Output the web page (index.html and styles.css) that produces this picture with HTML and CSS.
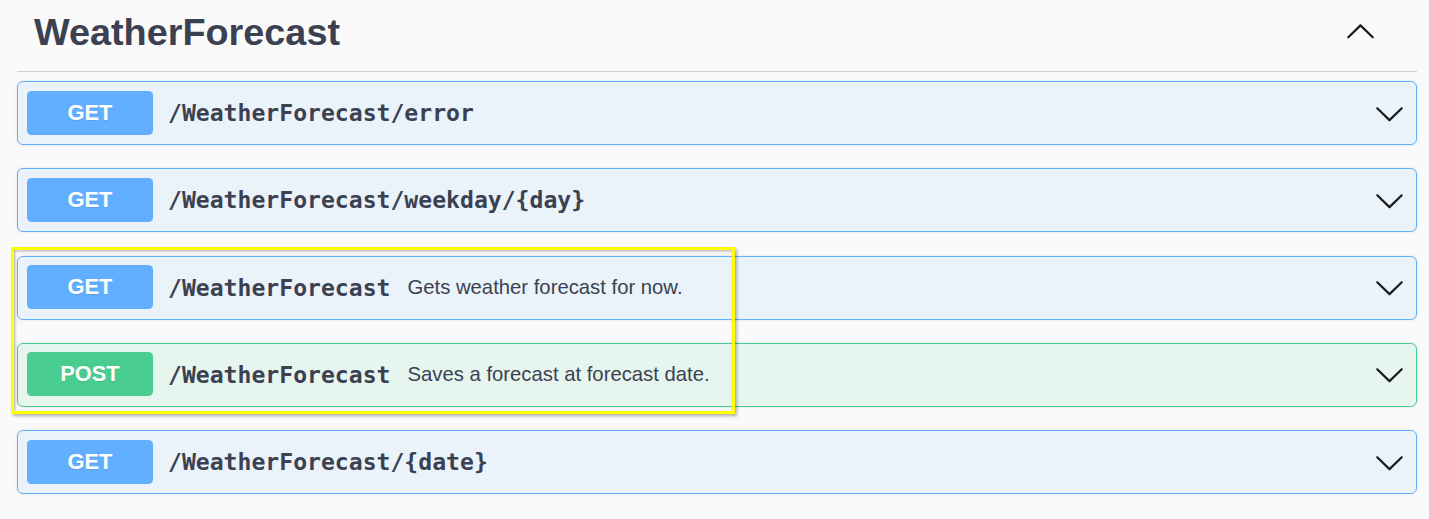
FILE: index.html
```html
<!DOCTYPE html>
<html lang="en">
<head>
<meta charset="utf-8">
<title>WeatherForecast</title>
<link rel="stylesheet" href="styles.css">
</head>
<body>
<div class="tag-section">
  <h3 class="tag-header">
    <span class="tag-title">WeatherForecast</span>
    <button class="tag-toggle" aria-label="Collapse">
      <svg viewBox="0 0 20 20" width="31" height="31"><path d="M17.418 14.891c.272.268.709.268.979 0s.271-.701 0-.969l-7.908-7.830c-.27-.268-.707-.268-.979 0l-7.908 7.83c-.27.268-.27.701 0 .969.271.268.709.268.979 0L10 7.75l7.418 7.141z"/></svg>
    </button>
  </h3>
  <div class="ops">
    <div class="opblock get">
      <span class="method">GET</span>
      <span class="path">/WeatherForecast/error</span>
      <span class="desc"></span>
      <svg class="arrow" viewBox="0 0 20 20" width="31" height="31"><path d="M17.418 6.109c.272-.268.709-.268.979 0s.271.701 0 .969l-7.908 7.83c-.27.268-.707.268-.979 0l-7.908-7.83c-.27-.268-.27-.701 0-.969.271-.268.709-.268.979 0L10 13.25l7.418-7.141z"/></svg>
    </div>
    <div class="opblock get">
      <span class="method">GET</span>
      <span class="path">/WeatherForecast/weekday/{day}</span>
      <span class="desc"></span>
      <svg class="arrow" viewBox="0 0 20 20" width="31" height="31"><path d="M17.418 6.109c.272-.268.709-.268.979 0s.271.701 0 .969l-7.908 7.83c-.27.268-.707.268-.979 0l-7.908-7.83c-.27-.268-.27-.701 0-.969.271-.268.709-.268.979 0L10 13.25l7.418-7.141z"/></svg>
    </div>
    <div class="opblock get">
      <span class="method">GET</span>
      <span class="path">/WeatherForecast</span>
      <span class="desc">Gets weather forecast for now.</span>
      <svg class="arrow" viewBox="0 0 20 20" width="31" height="31"><path d="M17.418 6.109c.272-.268.709-.268.979 0s.271.701 0 .969l-7.908 7.83c-.27.268-.707.268-.979 0l-7.908-7.83c-.27-.268-.27-.701 0-.969.271-.268.709-.268.979 0L10 13.25l7.418-7.141z"/></svg>
    </div>
    <div class="opblock post">
      <span class="method">POST</span>
      <span class="path">/WeatherForecast</span>
      <span class="desc">Saves a forecast at forecast date.</span>
      <svg class="arrow" viewBox="0 0 20 20" width="31" height="31"><path d="M17.418 6.109c.272-.268.709-.268.979 0s.271.701 0 .969l-7.908 7.83c-.27.268-.707.268-.979 0l-7.908-7.83c-.27-.268-.27-.701 0-.969.271-.268.709-.268.979 0L10 13.25l7.418-7.141z"/></svg>
    </div>
    <div class="opblock get">
      <span class="method">GET</span>
      <span class="path">/WeatherForecast/{date}</span>
      <span class="desc"></span>
      <svg class="arrow" viewBox="0 0 20 20" width="31" height="31"><path d="M17.418 6.109c.272-.268.709-.268.979 0s.271.701 0 .969l-7.908 7.83c-.27.268-.707.268-.979 0l-7.908-7.83c-.27-.268-.27-.701 0-.969.271-.268.709-.268.979 0L10 13.25l7.418-7.141z"/></svg>
    </div>
  </div>
</div>
<div class="highlight"></div>
</body>
</html>
```

FILE: styles.css
```css
html, body {
  margin: 0;
  padding: 0;
  background: #fafafa;
}
body {
  font-family: "Liberation Sans", Arial, sans-serif;
  color: #3b4151;
  position: relative;
  height: 519px;
  overflow: hidden;
}
.tag-section {
  padding: 0 12px 0 17px;
}
.tag-header {
  margin: 0;
  height: 72px;
  display: flex;
  align-items: center;
  border-bottom: 1px solid #cfd0d3;
  padding-left: 17px;
  box-sizing: border-box;
}
.tag-title {
  flex: 1;
  font-size: 37.8px;
  font-weight: bold;
  line-height: 1;
  color: #3b4151;
  margin-top: -6px;
}
.tag-toggle {
  border: 0;
  background: none;
  padding: 0;
  margin-right: 41px;
  margin-top: -10px;
  display: flex;
}
.tag-toggle svg, .arrow {
  fill: #1a1a1a;
}
.ops {
  padding-top: 9px;
  display: flex;
  flex-direction: column;
  gap: 23.25px;
}
.opblock {
  height: 64px;
  box-sizing: border-box;
  border: 1px solid #61affe;
  border-radius: 6px;
  background: rgba(97, 175, 254, 0.1);
  box-shadow: 0 0 3px rgba(0, 0, 0, 0.12);
  display: flex;
  align-items: center;
  padding: 0 11px 0 9px;
}
.opblock.post {
  border-color: #49cc90;
  background: rgba(73, 204, 144, 0.1);
}
.method {
  width: 126px;
  height: 44px;
  border-radius: 4.5px;
  background: #61affe;
  color: #fff;
  font-size: 21.8px;
  font-weight: bold;
  display: flex;
  align-items: center;
  justify-content: center;
  text-shadow: 0 1px 0 rgba(0, 0, 0, 0.1);
  flex: none;
  margin-top: -1px;
}
.post .method {
  background: #49cc90;
}
.path {
  font-family: "DejaVu Sans Mono", "Liberation Mono", monospace;
  font-weight: bold;
  font-size: 23.1px;
  color: #3b4151;
  margin-left: 15px;
}
.desc {
  flex: 1;
  font-size: 20.3px;
  color: #3b4151;
  margin-left: 17px;
}
.arrow {
  flex: none;
}
.highlight {
  position: absolute;
  left: 11px;
  top: 247px;
  width: 724px;
  height: 167px;
  box-sizing: border-box;
  border: 3px solid #ffff00;
  box-shadow: 2px 2px 3px rgba(0, 0, 0, 0.3), inset 1px 1px 3px rgba(0, 0, 0, 0.3);
  pointer-events: none;
}
```
